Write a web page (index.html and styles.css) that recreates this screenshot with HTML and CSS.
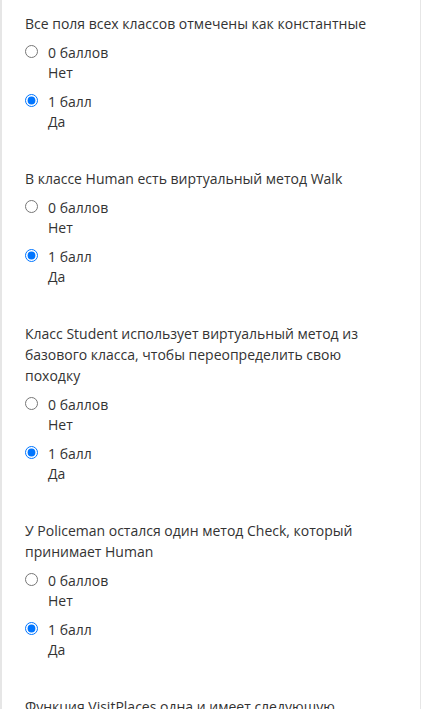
FILE: index.html
```html
<!DOCTYPE html>
<html lang="ru">
<head>
<meta charset="utf-8">
<link rel="stylesheet" href="styles.css">
</head>
<body>
<div class="card">
  <div class="question">
    <p class="q-text">Все поля всех классов отмечены как константные</p>
    <div class="options">
      <label class="option"><input type="radio" name="q1" class="radio"><span class="opt-label"><span class="pts">0 баллов</span><span class="ans">Нет</span></span></label>
      <label class="option"><input type="radio" name="q1" class="radio" checked><span class="opt-label"><span class="pts">1 балл</span><span class="ans">Да</span></span></label>
    </div>
  </div>
  <div class="question">
    <p class="q-text">В классе Human есть виртуальный метод Walk</p>
    <div class="options">
      <label class="option"><input type="radio" name="q2" class="radio"><span class="opt-label"><span class="pts">0 баллов</span><span class="ans">Нет</span></span></label>
      <label class="option"><input type="radio" name="q2" class="radio" checked><span class="opt-label"><span class="pts">1 балл</span><span class="ans">Да</span></span></label>
    </div>
  </div>
  <div class="question">
    <p class="q-text">Класс Student использует виртуальный метод из базового класса, чтобы переопределить свою походку</p>
    <div class="options">
      <label class="option"><input type="radio" name="q3" class="radio"><span class="opt-label"><span class="pts">0 баллов</span><span class="ans">Нет</span></span></label>
      <label class="option"><input type="radio" name="q3" class="radio" checked><span class="opt-label"><span class="pts">1 балл</span><span class="ans">Да</span></span></label>
    </div>
  </div>
  <div class="question">
    <p class="q-text">У Policeman остался один метод Check, который принимает Human</p>
    <div class="options">
      <label class="option"><input type="radio" name="q4" class="radio"><span class="opt-label"><span class="pts">0 баллов</span><span class="ans">Нет</span></span></label>
      <label class="option"><input type="radio" name="q4" class="radio" checked><span class="opt-label"><span class="pts">1 балл</span><span class="ans">Да</span></span></label>
    </div>
  </div>
  <div class="question">
    <p class="q-text">Функция VisitPlaces одна и имеет следующую сигнатуру</p>
  </div>
</div>
</body>
</html>
```

FILE: styles.css
```css
html, body {
  margin: 0;
  padding: 0;
  background: #ffffff;
}

body {
  font-family: "Open Sans", "Noto Sans", sans-serif;
  font-size: 14px;
  color: #333333;
}

.card {
  width: 421px;
  box-sizing: border-box;
  min-height: 760px;
  border-left: 2px solid #e6e6e6;
  border-right: 1px solid #e6e6e6;
  padding: 13px 24px 0 23px;
}

.question {
  margin-bottom: 36px;
}

.q-text {
  margin: 0;
  line-height: 21px;
}

.options {
  margin-top: 9px;
  display: flex;
  flex-direction: column;
  gap: 9px;
}

.option {
  display: flex;
  align-items: flex-start;
  gap: 10px;
  line-height: 20px;
}

.radio {
  width: 13px;
  height: 13px;
  margin: 2px 0 0 0;
  flex: none;
}

.opt-label {
  display: flex;
  flex-direction: column;
}
```
